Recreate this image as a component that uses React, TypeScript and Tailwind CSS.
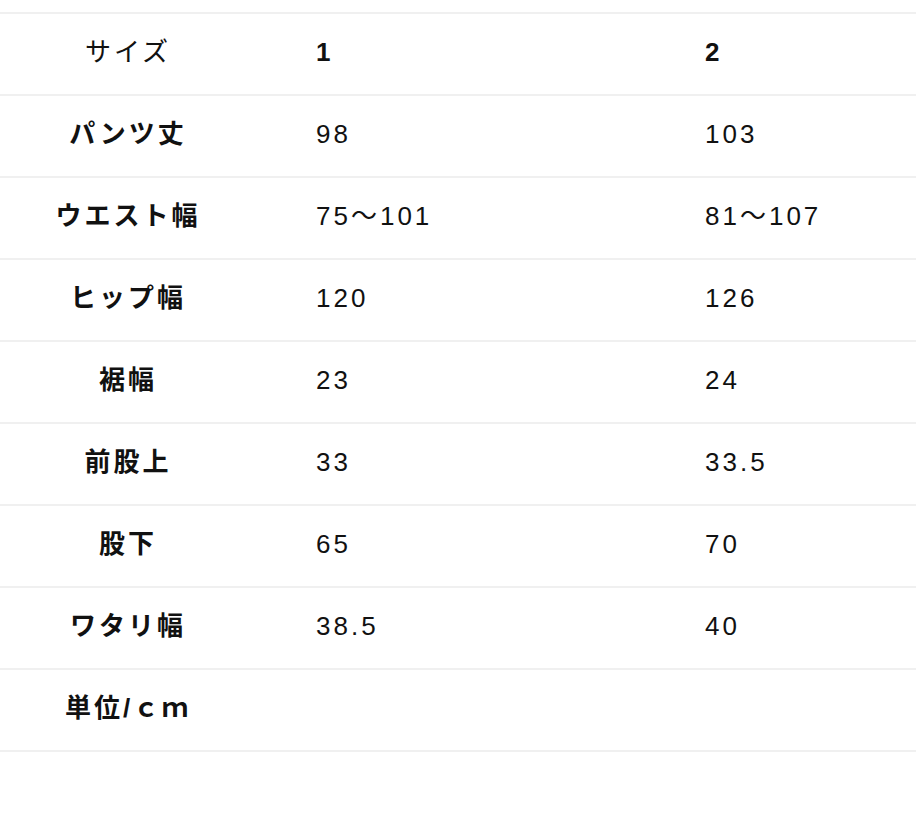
const rows: { label: string; a: string; b: string }[] = [
  { label: 'パンツ丈', a: '98', b: '103' },
  { label: 'ウエスト幅', a: '75～101', b: '81～107' },
  { label: 'ヒップ幅', a: '120', b: '126' },
  { label: '裾幅', a: '23', b: '24' },
  { label: '前股上', a: '33', b: '33.5' },
  { label: '股下', a: '65', b: '70' },
  { label: 'ワタリ幅', a: '38.5', b: '40' },
];

const font = { fontFamily: '"Liberation Sans", "Noto Sans CJK JP", sans-serif' };

function Row({ label, a, b, head = false }: { label: string; a: string; b: string; head?: boolean }) {
  return (
    <div className="flex h-[82px] items-center border-b-2 border-[#f0f0f0] pb-1">
      <div className={`w-[256px] text-center ${head ? 'font-normal' : 'font-bold'}`}>{label}</div>
      <div className={`w-[389px] pl-[60px] ${head ? 'font-bold' : ''}`}>{a}</div>
      <div className={`flex-1 pl-[60px] ${head ? 'font-bold' : ''}`}>{b}</div>
    </div>
  );
}

export default function App() {
  return (
    <main className="min-h-screen bg-white pt-[12px] text-[26px] tracking-[3px] text-[#111]" style={font}>
      <div className="border-t-2 border-[#f0f0f0]">
        <Row label="サイズ" a="1" b="2" head />
        {rows.map((r) => (
          <Row key={r.label} {...r} />
        ))}
        <Row label="単位/ｃｍ" a="" b="" />
      </div>
    </main>
  );
}
